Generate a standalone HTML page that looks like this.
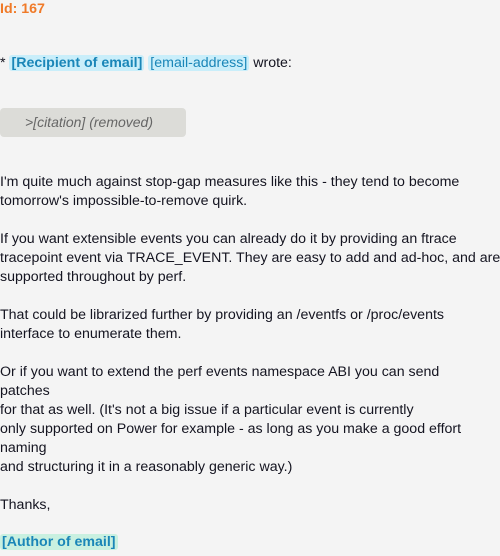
<!DOCTYPE html>
<html><head><meta charset="utf-8"><style>
html,body{margin:0;padding:0;background:#f4f4f4;width:500px;height:556px;overflow:hidden}
body{font-family:"Liberation Sans",sans-serif;font-size:14.2px;color:#141420;position:relative}
.a{position:absolute;left:0;white-space:nowrap;line-height:19px}
.id{color:#f07a28;font-weight:bold;top:0}
.hl{background:#c9eefa;color:#1a86b8;border-radius:3px;padding:0 2px}
.b{font-weight:bold}
.cit{position:absolute;left:0;top:108px;width:186px;height:29px;background:#dcdcd8;border-radius:4px;color:#666;font-style:italic;line-height:29px;text-indent:25px;font-size:14px}
.au{background:#c9f0e0;color:#1a86b8;font-weight:bold;border-radius:3px;padding:0 2px}
</style></head><body>
<div class="a id">Id: 167</div>
<div class="a" style="top:54px">* <span class="hl b">[Recipient of email]</span> <span class="hl">[email-address]</span> wrote:</div>
<div class="cit">&gt;[citation] (removed)</div>
<div class="a" style="top:173px">I'm quite much against stop-gap measures like this - they tend to become<br>tomorrow's impossible-to-remove quirk.<br><br>If you want extensible events you can already do it by providing an ftrace<br>tracepoint event via TRACE_EVENT. They are easy to add and ad-hoc, and are<br>supported throughout by perf.<br><br>That could be librarized further by providing an /eventfs or /proc/events<br>interface to enumerate them.<br><br>Or if you want to extend the perf events namespace ABI you can send<br>patches<br>for that as well. (It's not a big issue if a particular event is currently<br>only supported on Power for example - as long as you make a good effort<br>naming<br>and structuring it in a reasonably generic way.)<br><br>Thanks,</div>
<div class="a" style="top:533px"><span class="au">[Author of email]</span></div>
</body></html>
